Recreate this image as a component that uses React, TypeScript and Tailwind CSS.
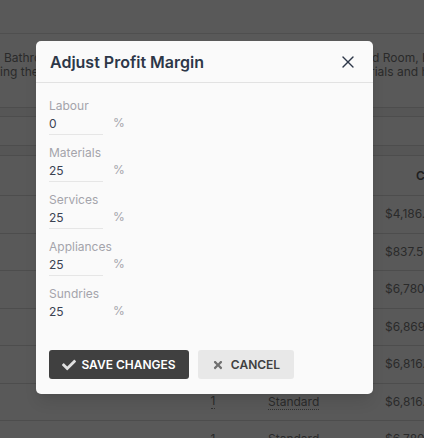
import React from "react";
import { X } from "lucide-react";
import { FaCheck, FaTimes } from "react-icons/fa";

const rows = [
  { qty: "1", level: "Standard", cost: "$4,186.20" },
  { qty: "1", level: "Standard", cost: "$837.50" },
  { qty: "1", level: "Standard", cost: "$6,780.00" },
  { qty: "1", level: "Standard", cost: "$6,869.40" },
  { qty: "1", level: "Standard", cost: "$6,816.75" },
  { qty: "1", level: "Standard", cost: "$6,816.75" },
  { qty: "1", level: "Standard", cost: "$6,780.00" },
];

const margins = [
  { label: "Labour", value: "0" },
  { label: "Materials", value: "25" },
  { label: "Services", value: "25" },
  { label: "Appliances", value: "25" },
  { label: "Sundries", value: "25", last: true },
];

function Page() {
  return (
    <div className="w-full h-full bg-white text-[12px] text-[#7a7a7a]">
      {/* top bar */}
      <div className="h-[34px] border-b border-[#e2e2e2]" />

      {/* description, mostly hidden behind the modal */}
      <div className="h-[74px] flex justify-between pt-[17px] leading-[14px] border-b border-[#dcdcdc] whitespace-nowrap overflow-hidden">
        <div className="w-[36px] overflow-hidden pl-[4px]">
          <p>Bathroom</p>
          <p className="-ml-[4px]">ing the</p>
        </div>
        <div className="w-[52px] overflow-hidden">
          <p>d Room, Kitchen</p>
          <p className="-ml-[2px]">rials and hardware</p>
        </div>
      </div>

      <div className="h-[9px] bg-[#f6f6f6] border-b border-[#dcdcdc]" />
      <div className="h-[29px] border-b border-[#dcdcdc]" />
      <div className="h-[10px] bg-[#f6f6f6] border-b border-[#dcdcdc]" />

      {/* table header */}
      <div className="h-[40px] flex items-center border-b border-[#dcdcdc] text-[#5a5a5a] font-semibold">
        <div className="w-[190px]" />
        <div className="w-[46px] text-center">Qty</div>
        <div className="w-[140px] pl-[32px]">Level</div>
        <div className="flex-1 pl-[40px] whitespace-nowrap overflow-hidden">Cost</div>
      </div>

      {rows.map((r, i) => (
        <div
          key={i}
          className="h-[37.5px] flex items-center border-b border-[#dcdcdc] whitespace-nowrap"
        >
          <div className="w-[190px]" />
          <div className="w-[46px] flex justify-center">
            <span className="border-b border-dotted border-[#8a8a8a] leading-[14px]">
              {r.qty}
            </span>
          </div>
          <div className="w-[149px] pl-[32px]">
            <span className="border-b border-dotted border-[#8a8a8a] leading-[14px]">
              {r.level}
            </span>
          </div>
          <div className="flex-1 overflow-hidden">{r.cost}</div>
        </div>
      ))}
    </div>
  );
}

export default function App() {
  return (
    <div
      className="relative w-[424px] h-[438px] overflow-hidden"
      style={{ fontFamily: "Inter, 'Noto Sans', sans-serif" }}
    >
      <Page />

      {/* backdrop */}
      <div className="absolute inset-0 bg-black/65" />

      {/* modal */}
      <div className="absolute left-[36px] top-[41px] w-[337px] bg-[#fafafa] rounded-[5px] shadow-lg">
        <div className="h-[42px] flex items-center justify-between pl-[14px] pr-[15px] border-b border-[#e2e2e2]">
          <h2 className="text-[16px] font-semibold text-[#2d3748]">
            Adjust Profit Margin
          </h2>
          <X size={20} strokeWidth={1.6} className="text-[#2d3748]" />
        </div>

        <div className="px-[13px] pt-[15px] pb-[15px]">
          {margins.map((m) => (
            <div key={m.label} className="mb-[10px]">
              <div className="text-[12px] leading-[15px] text-[#a4a4ab]">
                {m.label}
              </div>
              <div className="flex items-end">
                <div
                  className={`w-[54px] h-[22px] flex items-center text-[12px] text-[#3b4252] ${
                    m.last ? "" : "border-b border-[#e6e6e6]"
                  }`}
                >
                  {m.value}
                </div>
                <span className="ml-[10px] mb-[3px] text-[12px] text-[#a4a4ab]">%</span>
              </div>
            </div>
          ))}

          <div className="flex gap-[9px] mt-[27px]">
            <button className="w-[140px] h-[29px] flex items-center justify-center gap-[5px] bg-[#404040] text-white rounded-[3px] text-[12px] font-semibold">
              <FaCheck size={14} className="text-[#e0e0e0]" />
              SAVE CHANGES
            </button>
            <button className="w-[96px] h-[29px] flex items-center justify-center gap-[7px] bg-[#e8e8e8] text-[#404040] rounded-[3px] text-[12px] font-semibold">
              <FaTimes size={12} className="text-[#707070]" />
              CANCEL
            </button>
          </div>
        </div>
      </div>
    </div>
  );
}
